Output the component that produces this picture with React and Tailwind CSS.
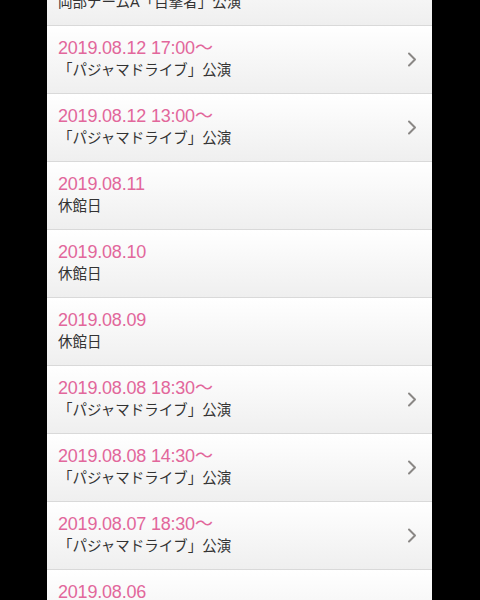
import React from 'react';

const rows = [
  { date: '2019.08.13 18:30〜', title: '岡部チームA「目撃者」公演', link: true },
  { date: '2019.08.12 17:00〜', title: '「パジャマドライブ」公演', link: true },
  { date: '2019.08.12 13:00〜', title: '「パジャマドライブ」公演', link: true },
  { date: '2019.08.11', title: '休館日', link: false },
  { date: '2019.08.10', title: '休館日', link: false },
  { date: '2019.08.09', title: '休館日', link: false },
  { date: '2019.08.08 18:30〜', title: '「パジャマドライブ」公演', link: true },
  { date: '2019.08.08 14:30〜', title: '「パジャマドライブ」公演', link: true },
  { date: '2019.08.07 18:30〜', title: '「パジャマドライブ」公演', link: true },
  { date: '2019.08.06', title: '休館日', link: false },
];

const Chevron = () => (
  <svg width="10" height="15" viewBox="0 0 10 15" fill="none" className="shrink-0">
    <path d="M2 1.5 L8 7.5 L2 13.5" stroke="#8a8785" strokeWidth="2" strokeLinecap="round" strokeLinejoin="round" />
  </svg>
);

const ScheduleRow = ({ date, title, link }) => (
  <div className="h-[68px] border-b border-[#d9d9d9] bg-gradient-to-b from-white to-[#efefef] flex items-center pl-[11px] pr-[15px]">
    <div className="flex-1 flex flex-col pb-[2px]">
      <span className="text-[18px] leading-[22px] text-[#e2679b] tracking-[-0.2px]">{date}</span>
      <span className="text-[14.5px] leading-[22px] text-[#333333]">{title}</span>
    </div>
    {link && <Chevron />}
  </div>
);

export default function App() {
  return (
    <div
      className="h-[600px] w-[480px] bg-black overflow-hidden"
      style={{ fontFamily: '"Liberation Sans", "Noto Sans CJK JP", sans-serif' }}
    >
      <div className="ml-[47px] w-[385px] -mt-[42px] flex flex-col">
        {rows.map((r, i) => (
          <ScheduleRow key={i} {...r} />
        ))}
      </div>
    </div>
  );
}
